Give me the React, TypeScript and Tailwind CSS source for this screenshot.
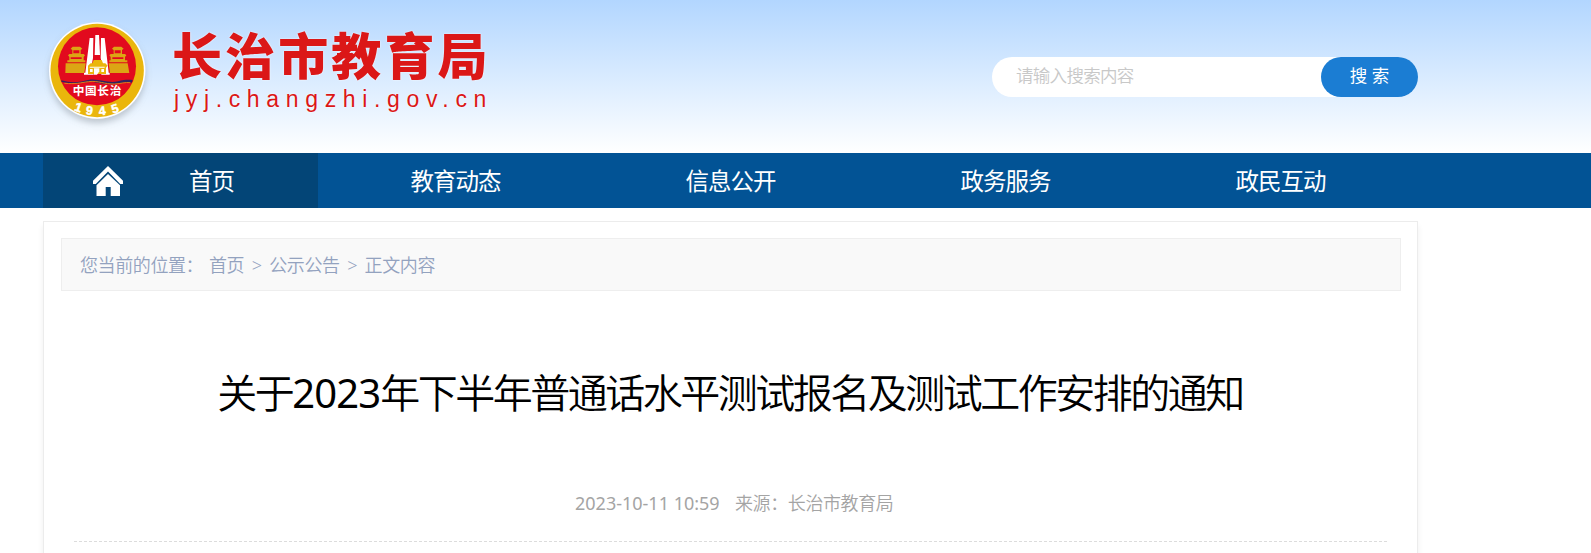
const navItems = ["教育动态", "信息公开", "政务服务", "政民互动"];

const FONT = "font-['Noto_Sans','Noto_Sans_CJK_SC',sans-serif]";

function Emblem() {
  return (
    <svg width="102" height="110" viewBox="48 60 306 330" className="shrink-0 overflow-visible">
      <defs>
        <filter id="shadow" x="-20%" y="-20%" width="140%" height="140%">
          <feDropShadow dx="0" dy="13" stdDeviation="9" floodColor="#777f88" floodOpacity="0.4" />
        </filter>
      </defs>
      <circle cx="201.5" cy="211.5" r="144.5" fill="#fff" filter="url(#shadow)" />
      <circle cx="201.5" cy="211.5" r="140" fill="#eab60c" />
      <circle cx="201" cy="199" r="117" fill="#e20a1e" />

      {/* monument */}
      <g fill="#fff">
        <path d="M196 105h11l3 60h-16z" />
        <path d="M179 114h11l-1 60-8 42 10 0v8h-29v-6h4z" />
        <path d="M213 114h11l12 104h3v6h-25v-8h6l-8-42z" />
      </g>

      {/* gate towers */}
      <g fill="#dca514">
        <path d="M122 146l6-6h22l7 6-5 4v12h9l4 4-4 5v14h-43v-14l-4-5 4-4h9v-12z" />
        <path d="M112 181h54v6h-54zM107 190h60l-4 29h-57z" />
        <path d="M246 146l6-6h22l7 6-5 4v12h9l4 4-4 5v14h-43v-14l-4-5 4-4h9v-12z" />
        <path d="M238 181h54v6h-54zM236 190h57l5 29h-58z" />
      </g>
      <path d="M130 151h18v9h-18zM122 172h33v5h-33zM254 151h18v9h-18zM247 172h33v5h-33z" fill="#e20a1e" />
      <path d="M174 197l8-7h5l4-10h24l4 10h7l7 7-5 6v19h-54v-19z" fill="#eab60c" />
      <path d="M179 200h45v3h-45zM180 207h8v9h-8zM214 207h8v9h-8z" fill="#fff" />
      <path d="M192 205h16v9l-7 10h-9z" fill="#fff" />

      {/* river */}
      <path d="M94 241c35 10 58 4 80-1 35-6 58 12 90 4 20-6 34-5 44-4l-3 8c-25-3-38 3-57 5-35 1-50-11-80-6-28 5-45 4-73-1z" fill="#31235f" />
      <path d="M103 250c35 3 48-2 73-5 28-4 48 8 78 7 20-1 30-6 47-4" fill="none" stroke="#df7d19" strokeWidth="3" />

      <text x="201" y="286" textAnchor="middle" fontSize="35" fontWeight="700" fill="#fff" textLength="146" fontFamily="Noto Sans CJK SC">中国长治</text>
      <g fill="#fff" stroke="#fff" strokeWidth="1.5" fontFamily="Liberation Sans" fontWeight="700" fontSize="37" textAnchor="middle">
        <text transform="translate(141 334) rotate(19)">1</text>
        <text transform="translate(177 344) rotate(7)">9</text>
        <text transform="translate(218 345) rotate(-7)">4</text>
        <text transform="translate(259 338) rotate(-18)">5</text>
      </g>
    </svg>
  );
}

function HomeIcon() {
  return (
    <svg width="30" height="30" viewBox="0 0 30 30" fill="#fff">
      <path d="M15 0L0 14.7v3.2h2.8L15 5.6l12.2 12.3H30v-3.2z" />
      <path d="M15 8L3.5 19.3V30h9.2v-9h5v9H27V19.3z" />
    </svg>
  );
}

export default function App() {
  return (
    <div className={`h-[553px] overflow-hidden bg-white ${FONT}`}>
      <header className="h-[153px] bg-linear-to-b from-[#b2d6ff] to-white pl-[43px]">
        <div className="flex w-[1375px] justify-between">
          <div className="flex pl-[3px] pt-5">
            <Emblem />
            <div className="pl-[24px] text-[#db1717]">
              <div className="mt-[9px] flex h-[48px] items-center font-['Noto_Sans_CJK_SC',sans-serif] text-[50px] leading-[48px] font-black tracking-[3.1px] whitespace-nowrap [text-shadow:0_0_2px_white]">
                长治市教育局
              </div>
              <div className="mt-[10px] pl-[2px] font-['Liberation_Sans',sans-serif] text-[23px] leading-6 tracking-[6.65px] whitespace-nowrap [text-shadow:0_0_2px_white]">
                jyj.changzhi.gov.cn
              </div>
            </div>
          </div>
          <div className="mt-[57px] flex h-10 w-[426px] rounded-full bg-white">
            <div className="flex-1 pl-[24px] text-[17.5px] leading-[37px] font-[350] tracking-[-0.7px] text-[#c8c8c8]">
              请输入搜索内容
            </div>
            <button className="h-10 w-[97px] rounded-full bg-[#1b7dd3] pb-[3px] text-[17.5px] leading-[37px] text-white">搜 索</button>
          </div>
        </div>
      </header>

      <nav className="h-[55px] bg-[#025395] pl-[43px] text-[23.5px] leading-[57px] tracking-[-1px] text-white">
        <div className="flex h-[55px] w-[1375px]">
          <a className="flex w-[275px] items-center bg-[#034577] pl-[50px]">
            <HomeIcon />
            <span className="pt-[2px] pl-[66px]">首页</span>
          </a>
          {navItems.map((item) => (
            <a key={item} className="w-[275px] text-center">{item}</a>
          ))}
        </div>
      </nav>

      <main className="mt-[13px] ml-[43px] h-[400px] w-[1375px] border border-[#ececec] pr-4 pl-[17px] pt-4 shadow-[0_5px_6px_rgba(0,0,0,0.07)]">
        <div className="flex h-[53px] items-center border border-[#eeeeee] bg-[#f9f9f9] pt-[2px] pl-[18px] text-[18px] font-[350] tracking-[-0.4px] whitespace-pre text-[#93a2bf]">
          <span className="w-[129px]">您当前的位置：</span>
          <span>首页</span>
          <span className="w-[25px] text-center">&gt;</span>
          <span>公示公告</span>
          <span className="w-[25px] text-center">&gt;</span>
          <span>正文内容</span>
        </div>

        <h1 className="mt-[72px] text-center text-[40px] leading-[60px] font-[350] tracking-[-2.5px] whitespace-nowrap text-black">
          <span className="-ml-[2px]">关于</span><span className="font-normal tracking-[-0.9px]">2023</span>年下半年普通话水平测试报名及测试工作安排的通知
        </h1>

        <div className="mt-[65px] flex pl-[514px] text-[18px] leading-[30px] font-[350] text-[#a4a4a4]">
          <span className="w-[160px] font-normal">2023-10-11 10:59</span>
          <span className="tracking-[-0.4px]">来源：长治市教育局</span>
        </div>
        <div className="mr-[14px] ml-[13px] mt-[23px] border-t border-dashed border-[#dcdcdc]" />
      </main>
    </div>
  );
}
